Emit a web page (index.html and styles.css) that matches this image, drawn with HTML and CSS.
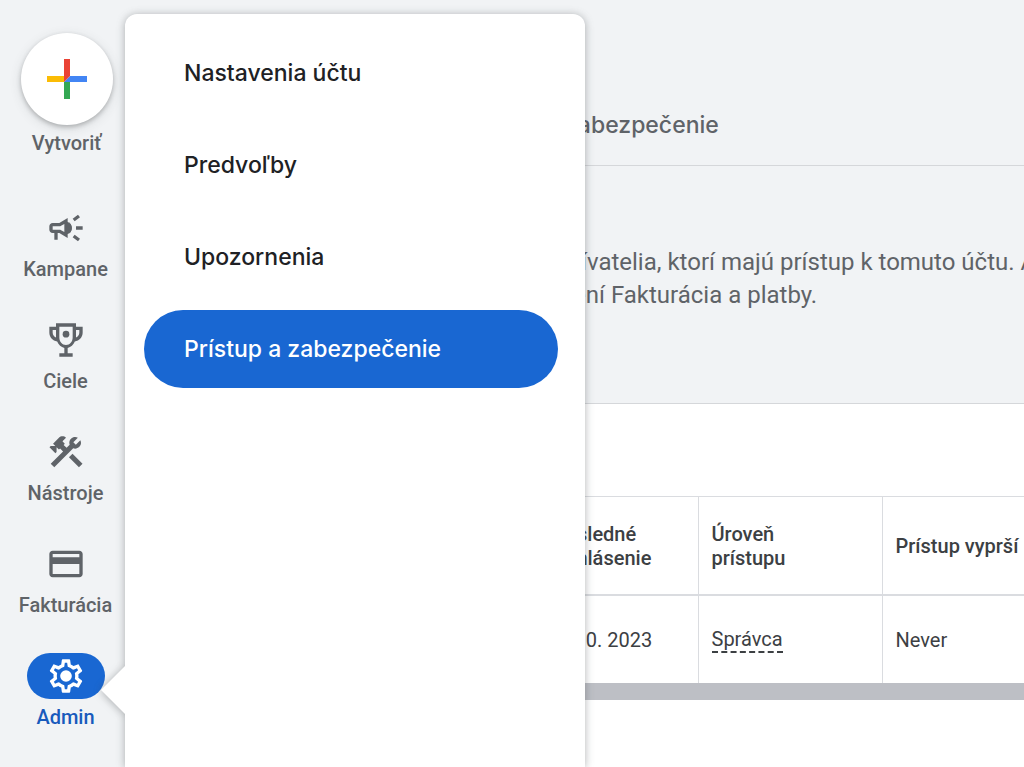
FILE: index.html
```
<!DOCTYPE html>
<html lang="sk">

<head>
	<meta charset="UTF-8">
	<meta name="viewport" content="width=device-width, initial-scale=1.0">
	<title>Prístup a zabezpečenie</title>
	<link rel="stylesheet" href="styles.css">
</head>

<body>
	<div class="app">
		<nav class="rail">
			<button type="button" class="create">
				<span class="create-circle">
					<svg width="40" height="40" viewBox="0 0 40 40">
						<path fill="#fbbc05" d="M0 17h17v6H0z" />
						<path fill="#34a853" d="M17 23v17h6V20z" />
						<path fill="#4285f4" d="M23 17h17v6H17z" />
						<path fill="#ea4335" d="M17 0h6v17l-6 6z" />
					</svg>
				</span>
				<span class="rail-label">Vytvoriť</span>
			</button>

			<a href="#" class="rail-item">
				<span class="rail-icon">
					<svg width="40" height="40" viewBox="0 0 24 24">
						<path d="M18 11v2h4v-2h-4zm-2 6.61c.96.71 2.21 1.65 3.2 2.39.4-.53.8-1.07 1.2-1.6-.99-.74-2.24-1.68-3.2-2.4-.4.54-.8 1.08-1.2 1.61zM20.4 5.6c-.4-.53-.8-1.07-1.2-1.6-.99.74-2.24 1.68-3.2 2.4.4.53.8 1.07 1.2 1.6.96-.72 2.21-1.65 3.2-2.4zM4 9c-1.1 0-2 .9-2 2v2c0 1.1.9 2 2 2h1v4h2v-4h1l5 3V6L8 9H4zm5.03 1.71L11 9.53v4.94l-1.97-1.18-.48-.29H4v-2h4.55l.48-.29zM15.5 12c0-1.33-.58-2.53-1.5-3.35v6.69c.92-.81 1.5-2.01 1.5-3.34z" />
						<path d="M12.500 8.200c1.800.4 3 2 3 3.800s-1.200 3.400-3 3.800z" />
					</svg>
				</span>
				<span class="rail-label">Kampane</span>
			</a>

			<a href="#" class="rail-item">
				<span class="rail-icon">
					<svg width="40" height="40" viewBox="0 0 24 24">
						<path d="M18 4V2H6v2H2v3.500C2 10.400 4 12.400 6.700 12.900c.8 2 2.400 3.400 4.300 3.900V20H8v2h8v-2h-3v-3.200c1.900-.5 3.500-1.900 4.300-3.900C20 12.400 22 10.400 22 7.500V4h-4zM4 7.500V6h2v4.500c-1.200-.5-2-1.600-2-3zM12 15c-2.300 0-4-2-4-4.500V4h8v6.500c0 2.500-1.700 4.500-4 4.500zm8-7.500c0 1.400-.8 2.500-2 3V6h2v1.500z" />
						<circle cx="12" cy="8.500" r="2" />
					</svg>
				</span>
				<span class="rail-label">Ciele</span>
			</a>

			<a href="#" class="rail-item">
				<span class="rail-icon">
					<svg width="40" height="40" viewBox="0 0 24 24">
						<path d="M13.783 15.172l2.121-2.121 5.996 5.996-2.121 2.121z" />
						<path d="M17.500 10c1.930 0 3.500-1.570 3.500-3.500 0-.58-.16-1.120-.41-1.600l-2.700 2.700-1.490-1.490 2.700-2.700c-.48-.25-1.020-.41-1.600-.41C15.570 3 14 4.570 14 6.500c0 .41.080.8.210 1.160l-1.850 1.850-1.780-1.780.71-.71-1.410-1.410L12 3.490c-1.170-1.170-3.070-1.170-4.240 0L4.220 7.030l1.410 1.410H2.810l-.71.71 3.540 3.540.71-.71V9.150l1.410 1.410.71-.71 1.780 1.780-7.410 7.410 2.120 2.120L16.340 9.790c.36.13.75.21 1.160.21z" />
					</svg>
				</span>
				<span class="rail-label">Nástroje</span>
			</a>

			<a href="#" class="rail-item">
				<span class="rail-icon">
					<svg width="40" height="40" viewBox="0 0 24 24">
						<path d="M20 4H4c-1.110 0-1.990.89-1.990 2L2 18c0 1.110.89 2 2 2h16c1.110 0 2-.89 2-2V6c0-1.110-.89-2-2-2zm0 14H4v-6h16v6zm0-10H4V6h16v2z" />
					</svg>
				</span>
				<span class="rail-label">Fakturácia</span>
			</a>

			<a href="#" class="rail-item active">
				<span class="rail-icon">
					<svg width="40" height="40" viewBox="0 0 24 24">
						<path d="M19.430 12.980c.04-.32.07-.64.07-.98 0-.34-.03-.66-.07-.98l2.110-1.650c.19-.15.24-.42.12-.64l-2-3.460c-.09-.16-.26-.25-.44-.25-.06 0-.12.01-.17.03l-2.490 1c-.52-.4-1.080-.73-1.690-.98l-.38-2.650C14.460 2.180 14.250 2 14 2h-4c-.25 0-.46.18-.49.42l-.38 2.650c-.61.25-1.170.59-1.690.98l-2.490-1c-.06-.02-.12-.03-.18-.03-.17 0-.34.09-.43.25l-2 3.460c-.13.22-.07.49.12.64l2.110 1.650c-.04.32-.07.65-.07.98 0 .33.03.66.07.98l-2.110 1.650c-.19.15-.24.42-.12.64l2 3.460c.09.16.26.25.44.25.06 0 .12-.01.17-.03l2.490-1c.52.4 1.080.73 1.690.98l.38 2.650c.03.24.24.42.49.42h4c.25 0 .46-.18.49-.42l.38-2.650c.61-.25 1.170-.59 1.690-.98l2.490 1c.06.02.12.03.18.03.17 0 .34-.09.43-.25l2-3.460c.12-.22.07-.49-.12-.64l-2.110-1.650zm-1.980-1.710c.04.31.05.52.05.73 0 .21-.02.43-.05.73l-.14 1.130.89.7 1.080.84-.7 1.210-1.270-.51-1.040-.42-.9.68c-.43.32-.84.56-1.250.73l-1.060.43-.16 1.130-.2 1.350h-1.400l-.19-1.350-.16-1.130-1.060-.43c-.43-.18-.83-.41-1.230-.71l-.91-.7-1.060.43-1.270.51-.7-1.210 1.080-.84.89-.7-.14-1.130c-.03-.31-.05-.54-.05-.74s.02-.43.05-.73l.14-1.130-.89-.7-1.080-.84.7-1.210 1.270.51 1.040.42.9-.68c.43-.32.84-.56 1.250-.73l1.060-.43.16-1.130.2-1.350h1.390l.19 1.350.16 1.130 1.060.43c.43.18.83.41 1.230.71l.91.7 1.060-.43 1.270-.51.7 1.210-1.070.85-.89.7.14 1.130z" />
						<circle cx="12" cy="12" r="3.500" />
					</svg>
				</span>
				<span class="rail-label">Admin</span>
			</a>
		</nav>

		<main class="content">
			<header class="page-header">
				<h1>zabezpečenie</h1>
			</header>

			<section class="intro">
				<p>ívatelia, ktorí majú prístup k tomuto účtu. A<br>ení Fakturácia a platby.</p>
			</section>

			<section class="users">
				<table>
					<thead>
						<tr>
							<th class="col-login">Posledné<br>prihlásenie</th>
							<th class="col-level">Úroveň<br>prístupu</th>
							<th>Prístup vyprší</th>
						</tr>
					</thead>
					<tbody>
						<tr>
							<td class="col-login">1. 10. 2023</td>
							<td><span class="editable">Správca</span></td>
							<td>Never</td>
						</tr>
					</tbody>
				</table>
				<div class="scrollbar"></div>
			</section>
		</main>

		<nav class="flyout">
			<a href="#">Nastavenia účtu</a>
			<a href="#">Predvoľby</a>
			<a href="#">Upozornenia</a>
			<a href="#" class="selected">Prístup a zabezpečenie</a>
		</nav>
	</div>
</body>

</html>
```
FILE: styles.css
```
* {
	margin: 0;
	padding: 0;
	box-sizing: border-box;
}

body {
	font-family: Roboto, "Liberation Sans", sans-serif;
	background: #f1f3f5;
	color: #3c4043;
}

a {
	text-decoration: none;
}

.app {
	display: flex;
	position: relative;
	min-height: 100vh;
	overflow: hidden;
}

/* left rail */
.rail {
	flex: 0 0 125px;
	display: flex;
	flex-direction: column;
	align-items: center;
	gap: 36px;
	padding: 33px 0 0 6px;
}

.create,
.rail-item {
	display: flex;
	flex-direction: column;
	align-items: center;
	gap: 6px;
	color: #5f6368;
}

.create {
	margin: 0 0 14px 2px;
	border: none;
	background: none;
	font-family: inherit;
	cursor: pointer;
}

.create-circle {
	display: flex;
	align-items: center;
	justify-content: center;
	width: 92px;
	height: 92px;
	border-radius: 50%;
	background: #fff;
	box-shadow: 0 2px 4px rgba(60, 64, 67, 0.3), 0 3px 12px rgba(60, 64, 67, 0.15);
}

.rail-icon {
	display: flex;
	align-items: center;
	justify-content: center;
	width: 78px;
	height: 46px;
	border-radius: 23px;
}

.rail-icon svg {
	fill: currentColor;
}

.rail-label {
	font-size: 20px;
	font-weight: 500;
	line-height: 24px;
}

.active .rail-icon {
	background: #1967d2;
	color: #fff;
}

.active .rail-label {
	color: #185abc;
}

/* menu over the page */
.flyout {
	position: absolute;
	top: 14px;
	bottom: 0;
	left: 125px;
	display: flex;
	flex-direction: column;
	gap: 14px;
	width: 460px;
	padding: 20px 27px 0 19px;
	border-radius: 12px 12px 0 0;
	background: #fff;
	filter: drop-shadow(0 1px 4px rgba(60, 64, 67, 0.4));
}

.flyout::before {
	content: "";
	position: absolute;
	top: 650px;
	left: -24px;
	width: 26px;
	height: 52px;
	background: #fff;
	clip-path: polygon(0 50%, 100% 0, 100% 100%);
}

.flyout a {
	display: flex;
	align-items: center;
	height: 78px;
	padding: 0 40px;
	border-radius: 39px;
	font-family: Inter, sans-serif;
	font-size: 23px;
	font-weight: 500;
	color: #202124;
}

.flyout .selected {
	background: #1967d2;
	color: #fff;
}

/* page */
.content {
	flex: 1;
	min-width: 0;
	display: flex;
	flex-direction: column;
}

.page-header {
	display: flex;
	align-items: center;
	height: 166px;
	padding: 84px 0 0 440px;
	border-bottom: 1px solid #d5d7da;
}

.page-header h1 {
	font-family: Inter, sans-serif;
	font-size: 23px;
	font-weight: 500;
	color: #5f6368;
}

.intro {
	height: 238px;
	padding: 80px 0 0 448px;
	border-bottom: 1px solid #d5d7da;
}

.intro p {
	font-size: 24px;
	line-height: 33px;
	text-indent: 8px;
	white-space: nowrap;
	color: #5f6368;
}

.users {
	flex: 1;
	padding-top: 92px;
	background: #fff;
}

.users table {
	width: 100%;
	table-layout: fixed;
	border-collapse: collapse;
	border-top: 1px solid #dadce0;
}

.users th,
.users td {
	padding: 2px 0 0 13px;
	border-left: 1px solid #dadce0;
	font-size: 20px;
	line-height: 24px;
	text-align: left;
	white-space: nowrap;
}

.users th {
	height: 98px;
	border-bottom: 2px solid #dadce0;
	font-weight: 500;
}

.users td {
	height: 88px;
}

.users .col-login {
	width: 573px;
	padding-left: 428px;
	border-left: none;
}

.users .col-level {
	width: 184px;
}

.editable {
	display: inline-block;
	border-bottom: 2px dashed #3c4043;
}

.scrollbar {
	height: 17px;
	background: #bdbfc5;
}
```
